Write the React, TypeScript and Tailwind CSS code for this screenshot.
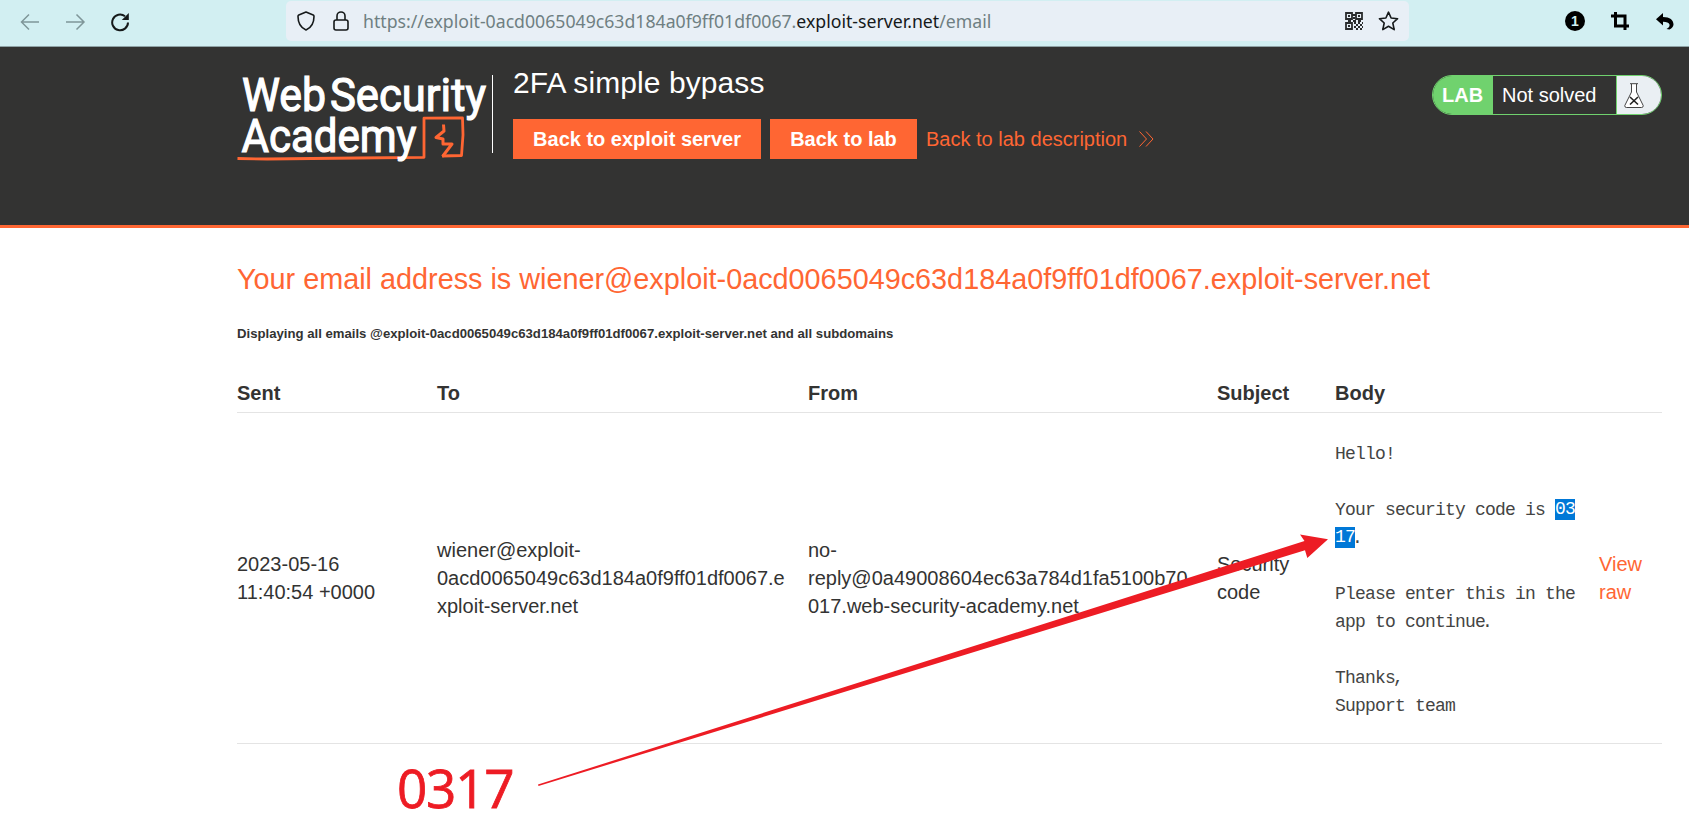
import React from "react";

const COLS = "grid grid-cols-[200px_371px_409px_118px_264px_63px]";

function BrowserBar() {
  return (
    <div className="flex h-[47px] items-start border-b border-[#8fa3a6] bg-[#d2eff2]">
      <div className="flex h-[43px] w-[286px] items-center pl-5">
        <svg width="20" height="20" viewBox="0 0 20 20" fill="none" stroke="#7f9699" strokeWidth="1.5">
          <path d="M19 10H2M9 2.5L1.5 10L9 17.5" />
        </svg>
        <svg className="ml-[26px]" width="20" height="20" viewBox="0 0 20 20" fill="none" stroke="#7f9699" strokeWidth="1.5">
          <path d="M0 10H17.5M10.5 2.5L18 10L10.5 17.5" />
        </svg>
        <svg className="ml-6" width="20" height="20" viewBox="0 0 20 20" fill="none" stroke="#15191a" strokeWidth="2">
          <path d="M18 10.5A7.9 7.9 0 1 1 15 4.2" />
          <path d="M18.8 1V8H11.8Z" fill="#15191a" stroke="none" />
        </svg>
      </div>
      <div className="mt-px flex h-10 w-[1123px] items-center rounded-[5px] bg-[#e8eff6] pl-[11px]">
        <svg width="18" height="20" viewBox="0 0 18 20" fill="none" stroke="#15191a" strokeWidth="1.6" strokeLinejoin="round">
          <path d="M9 1L16.2 4Q17 4.4 17 5.4C17 11.5 14.5 16.5 9 19C3.5 16.5 1 11.5 1 5.4Q1 4.4 1.8 4Z" />
        </svg>
        <svg className="ml-[18px]" width="16" height="20" viewBox="0 0 16 20" fill="none" stroke="#15191a" strokeWidth="1.6">
          <rect x="1" y="9" width="14" height="10" rx="2" />
          <path d="M4 9V5A4 4 0 0 1 12 5V9" />
        </svg>
        <div className="ml-[14px] w-[982px] whitespace-nowrap font-['Noto_Sans','Open_Sans',sans-serif] text-[17.68px] leading-[38px] text-[#6f7f82]">
          https://exploit-0acd0065049c63d184a0f9ff01df0067.<span className="text-[#15191a]">exploit-server.net</span>/email
        </div>
        <svg width="18" height="18" viewBox="0 0 18 18" fill="none" stroke="#2a2c2d" strokeWidth="1.8">
          <path d="M1 1h6v6h-6zM11 1h6v6h-6zM1 11h6v6h-6z" />
          <path d="M3 4h2M13 4h2M3 14h2M7 3h4M8 6h2M3 9h3M8 9h3M13 9h3" />
          <path d="M9 11h9M11 13h7M9 15h9M11 17h7" strokeDasharray="2 2" />
        </svg>
        <svg className="ml-[15px]" width="21" height="21" viewBox="0 0 21 21" fill="none" stroke="#15191a" strokeWidth="1.6" strokeLinejoin="round">
          <path d="M10.5 1.2L13.1 7L19.6 7.7L14.8 12L16.2 18.600L10.5 15.3L4.8 18.6L6.2 12L1.4 7.7L7.9 7Z" />
        </svg>
      </div>
      <div className="flex h-[42px] items-center pl-[156px]">
        <div className="flex h-5 w-5 items-center justify-center rounded-full bg-black font-['Liberation_Sans',sans-serif] text-[14px] font-bold text-[#d2eff2]">1</div>
        <svg className="ml-[26px]" width="18" height="18" viewBox="0 0 18 18" fill="none" stroke="#000" strokeWidth="3">
          <path d="M0 4H14V18M4.500 0V14H18" />
        </svg>
        <svg className="ml-[27px]" width="18" height="18" viewBox="0 0 18 18">
          <path d="M7 1V5C14 5 17.5 8 17.5 12.5Q17.3 15.6 13.5 17.5L10.5 17Q14 15 13.5 12.5Q12.5 9.8 7 9.8V13.5L0 7.2Z" />
        </svg>
      </div>
    </div>
  );
}

function Logo() {
  return (
    <svg className="shrink-0 overflow-visible" width="256" height="100" viewBox="0 0 256 100">
      <g fill="none" stroke="#ff6633" strokeLinejoin="round">
        <path d="M0.5 91.5L30 92L120 91L187 90.3L187 51.2L225.500 51L226 68L224.500 88.500L205 89" strokeWidth="2.8" />
        <path d="M206.500 57.500L207 64L199 70.500L206 72V77L215 77L205.500 89.500" strokeWidth="3" />
      </g>
      <g fill="#fff" stroke="#fff" strokeWidth="1.2" fontFamily="Roboto, sans-serif" fontWeight="400">
        <text x="5" y="43.500" fontSize="47" textLength="84" lengthAdjust="spacingAndGlyphs">Web</text>
        <text x="93" y="43.500" fontSize="47" textLength="156" lengthAdjust="spacingAndGlyphs">Security</text>
        <text x="4.500" y="84.500" fontSize="47" textLength="175" lengthAdjust="spacingAndGlyphs">Academy</text>
      </g>
      <path d="M255.500 8V86" stroke="#fff" />
    </svg>
  );
}

function LabHeader() {
  return (
    <header className="flex h-[181px] border-b-[3px] border-[#ff6633] bg-[#333332] pl-[237px] text-[20px]">
      <div className="w-[276px] pt-5"><Logo /></div>
      <div className="w-[919px] pt-[18px]">
        <h2 className="text-[30px] leading-[36px] tracking-[0.08px] text-white">2FA simple bypass</h2>
        <div className="mt-[18px] flex h-10 items-center whitespace-nowrap">
          <a className="flex h-10 w-[248px] items-center justify-center bg-[#ff6633] font-bold text-white">Back to exploit server</a>
          <a className="ml-[9px] flex h-10 w-[147px] items-center justify-center bg-[#ff6633] font-bold text-white">Back to lab</a>
          <a className="ml-[9px] text-[#ff6633]">Back to lab description</a>
          <svg className="ml-[12px]" width="15" height="16" viewBox="0 0 15 16" fill="none" stroke="#ff6633">
            <path d="M0.5 0.5L7.5 8L0.5 15.5M7 0.5L14 8L7 15.5" />
          </svg>
        </div>
      </div>
      <div className="mt-7 flex h-10 w-[230px] overflow-hidden rounded-[20px] border border-[#70d26e] bg-[#333332] leading-[38px] text-white">
        <div className="w-[60px] bg-[#70d26e] pl-[9px] font-bold">LAB</div>
        <div className="w-[124px] border-r border-[#70d26e] pl-[9px]">Not solved</div>
        <div className="flex flex-1 items-center bg-[#eaeff3] pl-[7px]">
          <svg width="20" height="25" viewBox="0 0 20 25" fill="#fff" stroke="#444" strokeWidth="1">
            <path d="M7.5 1V9L0.8 22.5Q0.5 24.3 2.3 24.5H17.7Q19.5 24.3 19.2 22.5L12.5 9V1" />
            <path d="M6 0.7H14" />
            <path d="M6 14L14 21.5M14 14L6 21.5" stroke="#222" strokeWidth="1.6" />
          </svg>
        </div>
      </div>
    </header>
  );
}

function Selected({ children }: { children: React.ReactNode }) {
  return <span className="inline-block h-[21px] bg-[#0078d7] align-middle leading-[21px] text-white">{children}</span>;
}

function EmailTable() {
  return (
    <div className="w-[1425px]">
      <div className={`${COLS} h-[39px] border-b border-[#e4e4e4] font-bold leading-[38px]`}>
        <div>Sent</div>
        <div>To</div>
        <div>From</div>
        <div>Subject</div>
        <div>Body</div>
        <div />
      </div>
      <div className={`${COLS} h-[331px] items-center whitespace-nowrap border-b border-[#e4e4e4] leading-[28px]`}>
        <div>2023-05-16<br />11:40:54 +0000</div>
        <div>wiener@exploit-<br />0acd0065049c63d184a0f9ff01df0067.e<br />xploit-server.net</div>
        <div>no-<br />reply@0a49008604ec63a784d1fa5100b70<br />017.web-security-academy.net</div>
        <div>Security<br />code</div>
        <div className="pt-[3px] font-['Liberation_Mono',monospace] text-[18px] tracking-[-0.8px] text-[#444443]">
          <div className="h-14">Hello!</div>
          <div className="h-7">Your security code is <Selected>03</Selected></div>
          <div className="h-14"><Selected>17</Selected><span className="-ml-[3px]">.</span></div>
          <div className="h-7">Please enter this in the</div>
          <div className="h-14">app to continue<span className="-ml-[3px]">.</span></div>
          <div className="h-7">Thanks<span className="-ml-[2px]">,</span></div>
          <div className="h-7">Support team</div>
        </div>
        <a className="text-[#ff6633]">View<br />raw</a>
      </div>
    </div>
  );
}

export default function App() {
  return (
    <div className="relative h-[840px] w-[1689px] overflow-hidden bg-white font-['Liberation_Sans',sans-serif] text-[20px] text-[#333332]">
      <BrowserBar />
      <LabHeader />
      <main className="pl-[237px] pt-[33px]">
        <h1 className="whitespace-nowrap text-[28.8px] leading-[36px] text-[#ff6633]">
          Your email address is wiener@exploit-0acd0065049c63d184a0f9ff01df0067.exploit-server.net
        </h1>
        <p className="mb-[30px] mt-[27px] whitespace-nowrap text-[13.17px] font-bold leading-5">
          Displaying all emails @exploit-0acd0065049c63d184a0f9ff01df0067.exploit-server.net and all subdomains
        </p>
        <EmailTable />
      </main>
      <div className="absolute left-[397px] top-[753px] font-['Open_Sans',sans-serif] text-[53px] leading-[70px] tracking-[-1.2px] text-[#ed1c24] [-webkit-text-stroke:0.8px_#ed1c24]">0317</div>
      <svg className="absolute left-0 top-0" width="1689" height="840" viewBox="0 0 1689 840">
        <path d="M538 784.500L1304.500 541L1300 534.500L1328 539.300L1307.300 558L1305 550.300L538.500 786Z" fill="#ed1c24" />
      </svg>
    </div>
  );
}
